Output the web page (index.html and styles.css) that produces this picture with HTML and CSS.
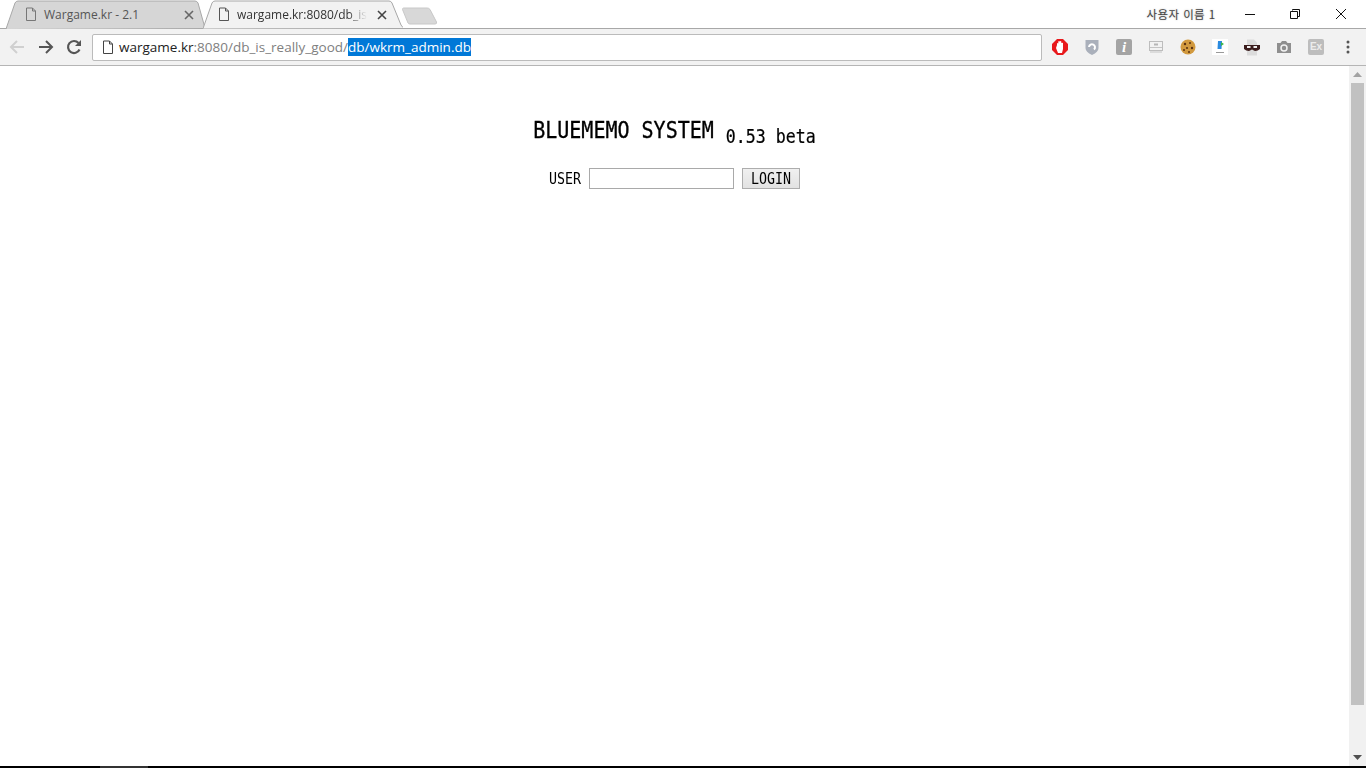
FILE: index.html
```html
<!DOCTYPE html>
<html lang="ko">
<head>
    <meta charset="UTF-8">
    <title>BLUEMEMO SYSTEM</title>
    <link rel="stylesheet" href="styles.css">
</head>
<body>
    <div class="tabstrip">
        <div class="tab tab_off">
            <svg class="tab_shape" width="199" height="29" viewBox="0 0 199 29"><path d="M0 29 L9 3 Q10 1 12 1 L189 1 Q191 1 192 3 L199 28" fill="#d6d6d6" stroke="#a8a8a8"/></svg>
            <svg class="page_icon" width="12" height="15" viewBox="0 0 12 15"><path d="M1.5 1 H7.5 L10.5 4 V13.5 H1.5 Z M7.5 1 V4 H10.5" fill="none" stroke="#777"/></svg>
            <span class="tab_title">Wargame.kr - 2.1</span>
            <svg class="tab_close" width="10" height="10" viewBox="0 0 10 10"><path d="M1 1 L9 9 M9 1 L1 9" stroke="#666" stroke-width="1.6"/></svg>
        </div>
        <div class="tab tab_on">
            <svg class="tab_shape" width="200" height="29" viewBox="0 0 200 29"><path d="M0 28.5 L9 3 Q10 1 12 1 L186 1 Q188 1 189 3 L198 25 Q199 28 203 28" fill="#f2f2f2" stroke="#a8a8a8"/></svg>
            <svg class="page_icon" width="12" height="15" viewBox="0 0 12 15"><path d="M1.5 1 H7.5 L10.5 4 V13.5 H1.5 Z M7.5 1 V4 H10.5" fill="none" stroke="#555"/></svg>
            <span class="tab_title tab_fade">wargame.kr:8080/db_is_</span>
            <svg class="tab_close" width="10" height="10" viewBox="0 0 10 10"><path d="M1 1 L9 9 M9 1 L1 9" stroke="#444" stroke-width="1.6"/></svg>
        </div>
        <svg class="new_tab" width="36" height="18" viewBox="0 0 36 18"><path d="M1.5 1 H25 Q27 1 28 2.5 L34.5 15 Q35 17 33 17 H8 Q6.500 17 6 16 L0.500 2.500 Q0.500 1 1.500 1 Z" fill="#d8d8d8" stroke="#c8c8c8"/></svg>
        <span class="user_name">사용자 이름 1</span>
        <div class="win_btns">
            <div class="win_btn"><svg width="12" height="12" viewBox="0 0 12 12"><path d="M1 6.500 H11" stroke="#111"/></svg></div>
            <div class="win_btn"><svg width="12" height="12" viewBox="1 0 12 12"><path d="M3.500 2.500 V1.500 H10.500 V8.500 H8.500 M1.500 3.500 H8.500 V10.500 H1.500 Z" fill="none" stroke="#111"/></svg></div>
            <div class="win_btn"><svg width="12" height="12" viewBox="0 0 12 12"><path d="M1 1 L11 11 M11 1 L1 11" stroke="#111"/></svg></div>
        </div>
    </div>

    <div class="toolbar">
        <div class="nav_btn"><svg width="16" height="16" viewBox="0 0 16 16"><path d="M15 8 H2 M8 2 L2 8 L8 14" fill="none" stroke="#d0d0d0" stroke-width="2"/></svg></div>
        <div class="nav_btn"><svg width="17" height="16" viewBox="-1 0 17 16"><path d="M1 8 H14 M8 2 L14 8 L8 14" fill="none" stroke="#555" stroke-width="2"/></svg></div>
        <div class="nav_btn"><svg width="17" height="16" viewBox="-1 0 17 16"><path d="M13.500 10.500 A6 6 0 1 1 12.500 4" fill="none" stroke="#555" stroke-width="2.200"/><path d="M15 1 V7 H9 Z" fill="#555"/></svg></div>
        <div class="omnibox">
            <svg class="page_icon" width="12" height="15" viewBox="0 0 12 15"><path d="M1.500 1 H7.500 L10.500 4 V13.500 H1.500 Z M7.500 1 V4 H10.500" fill="none" stroke="#444"/></svg>
            <span class="url"><b>wargame.kr</b>:8080/db_is_really_good/<span class="url_sel">db/wkrm_admin.db</span></span>
        </div>
        <div class="ext_list">
            <div class="ext"><svg width="18" height="18" viewBox="0 0 18 18"><path d="M6 1 H12 L17 6 V12 L12 17 H6 L1 12 V6 Z" fill="#e8191c"/><path d="M5 10 L6 7 V5.500 Q6.700 4.500 7.300 5.500 V3.500 Q8 2.700 8.700 3.500 V3.500 Q9.500 2.700 10.300 3.500 V5 Q11.200 4.300 12 5 V11 L11 15 H7 Z" fill="#fff"/></svg></div>
            <div class="ext"><svg width="14" height="17" viewBox="0 0 14 17"><path d="M0.500 1 H13.500 V9 Q13.500 13 7 16 Q0.500 13 0.500 9 Z" fill="#aab0bb"/><path d="M4 8 A3 3 0 1 1 9 10.500" fill="none" stroke="#fff" stroke-width="2"/></svg></div>
            <div class="ext"><div class="ext_info">i</div></div>
            <div class="ext"><svg width="14" height="12" viewBox="0 0 14 12"><rect x="0.500" y="0.500" width="13" height="9" fill="#f2f2f2" stroke="#bdbdbd"/><rect x="5" y="2.500" width="4" height="2" fill="#b5b5b5"/><path d="M1 6.500 H13 M1 11 H13" stroke="#c4c4c4"/></svg></div>
            <div class="ext"><svg width="16" height="16" viewBox="0 0 16 16"><circle cx="8" cy="8" r="7.500" fill="#d29a3f"/><circle cx="5" cy="5" r="1.200" fill="#5b3212"/><circle cx="10" cy="4" r="1" fill="#5b3212"/><circle cx="12" cy="9" r="1.200" fill="#5b3212"/><circle cx="7" cy="9" r="1.100" fill="#5b3212"/><circle cx="9" cy="13" r="1" fill="#5b3212"/><circle cx="4" cy="11" r="1" fill="#5b3212"/></svg></div>
            <div class="ext"><svg width="16" height="16" viewBox="0 0 16 16"><rect width="16" height="16" fill="#fff"/><path d="M6 2 H10 L9.500 10 H5.500 Z" fill="#2a8be0"/><path d="M9 3 L12 5 L9 7 Z" fill="#3cb54a"/><path d="M4 13.500 H12" stroke="#999"/></svg></div>
            <div class="ext"><svg width="16" height="17" viewBox="0 0 16 17"><path d="M3 0.500 H10 L13 3.500 V16.500 H3 Z" fill="#dcdcdc"/><path d="M0 6 H16 V10 Q14 12 11 12 L8 10.500 L5 12 Q2 12 0 10 Z" fill="#3a1c1c"/><rect x="3" y="7" width="3.500" height="2" fill="#eee"/><rect x="9.500" y="7" width="3.500" height="2" fill="#eee"/></svg></div>
            <div class="ext"><svg width="16" height="14" viewBox="0 0 16 14"><path d="M1 3 H4.500 L6 1 H10 L11.500 3 H15 V13 H1 Z" fill="#8f8f8f"/><circle cx="8" cy="8" r="3" fill="none" stroke="#f2f2f2" stroke-width="1.500"/></svg></div>
            <div class="ext"><div class="ext_ex">Ex</div></div>
            <div class="ext"><svg width="4" height="14" viewBox="0 0 4 14"><circle cx="2" cy="2" r="1.500" fill="#555"/><circle cx="2" cy="7" r="1.500" fill="#555"/><circle cx="2" cy="12" r="1.500" fill="#555"/></svg></div>
        </div>
    </div>

    <div class="viewport">
        <div class="content">
            <h2 class="title">BLUEMEMO SYSTEM <span class="version">0.53 beta</span></h2>
            <form class="login">
                <label class="login_label">USER</label>
                <input class="login_input" type="text">
                <button class="login_btn" type="button"><span class="tall_text">LOGIN</span></button>
            </form>
        </div>
        <div class="scrollbar">
            <svg class="scroll_arrow" width="9" height="5" viewBox="0 0 9 5"><path d="M4.500 0 L9 5 H0 Z" fill="#a3a3a3"/></svg>
            <div class="scroll_thumb"></div>
            <svg class="scroll_arrow" width="9" height="5" viewBox="0 0 9 5"><path d="M0 0 H9 L4.500 5 Z" fill="#505050"/></svg>
        </div>
    </div>

    <div class="taskbar"><div class="taskbar_item"></div></div>
</body>
</html>
```

FILE: styles.css
```css
*{
    margin: 0;
    padding: 0;
    box-sizing: border-box;
}
html,body{
    height: 100%;
    overflow: hidden;
}
body{
    display: flex;
    flex-direction: column;
    width: 1366px;
    height: 768px;
    background-color: #fff;
    font-family: "Open Sans", "Noto Sans", sans-serif;
}

/* tab strip */
.tabstrip{
    display: flex;
    align-items: flex-start;
    height: 29px;
    padding-left: 6px;
    position: relative;
    border-bottom: 1px solid #a8a8a8;
    flex-shrink: 0;
}
.tab{
    display: flex;
    align-items: center;
    height: 29px;
    position: relative;
}
.tab_off{
    width: 199px;
    padding-left: 19px;
}
.tab_on{
    width: 200px;
    margin-left: -2px;
    padding-left: 15px;
}
.tab_shape{
    position: absolute;
    left: 0;
    top: 0;
}
.page_icon{
    position: relative;
    flex-shrink: 0;
}
.tab_title{
    position: relative;
    margin-left: 7px;
    width: 130px;
    font-size: 12px;
    white-space: pre;
    color: #555;
}
.tab_on .tab_title{
    color: #333;
}
.tab_fade{
    -webkit-mask-image: linear-gradient(to right, #000 85%, transparent 100%);
    mask-image: linear-gradient(to right, #000 85%, transparent 100%);
}
.tab_close{
    position: relative;
    margin-left: 10px;
}
.new_tab{
    margin: 7px 0 0 -1px;
    flex-shrink: 0;
}
.user_name{
    margin: 6px 0 0 auto;
    font-family: "Noto Sans CJK KR", sans-serif;
    font-size: 11.5px;
    letter-spacing: 0.4px;
    line-height: 16px;
    color: #444;
    text-shadow: 0 0 2px #bbb;
}
.win_btns{
    display: flex;
    margin-left: 12px;
    padding-right: 2px;
}
.win_btn{
    display: flex;
    justify-content: center;
    align-items: center;
    width: 45.5px;
    height: 28px;
}

/* toolbar */
.toolbar{
    display: flex;
    align-items: center;
    height: 37px;
    padding: 0 2px 0 3px;
    background-color: #f2f2f2;
    border-bottom: 1px solid #b5b5b5;
    flex-shrink: 0;
}
.nav_btn{
    display: flex;
    justify-content: center;
    align-items: center;
    width: 28px;
    height: 28px;
}
.omnibox{
    display: flex;
    align-items: center;
    width: 950px;
    height: 27px;
    margin-left: 5px;
    padding-left: 9px;
    background-color: #fff;
    border: 1px solid #bbb;
    border-radius: 2px;
}
.url{
    margin-left: 5px;
    font-size: 13.5px;
    line-height: 18px;
    color: #808080;
    white-space: pre;
}
.url b{
    font-weight: normal;
    color: #222;
}
.url_sel{
    color: #fff;
    background-color: #0078d7;
}
.ext_list{
    display: flex;
    margin-left: 2px;
}
.ext{
    display: flex;
    justify-content: center;
    align-items: center;
    width: 32px;
    height: 28px;
}
.ext_info{
    width: 16px;
    height: 16px;
    background-color: #a4a4a4;
    border-radius: 2px;
    color: #fff;
    font: italic bold 15px/16px "Liberation Serif", serif;
    text-align: center;
}
.ext_ex{
    width: 16px;
    height: 16px;
    background-color: #bdbdbd;
    border-radius: 2px;
    color: #ececec;
    font: bold 10px/16px "Liberation Sans", sans-serif;
    text-align: center;
}

/* page */
.viewport{
    display: flex;
    flex: 1;
    min-height: 0;
}
.content{
    flex: 1;
    padding-top: 49px;
    text-align: center;
    font-family: "DejaVu Sans Mono", monospace;
    color: #000;
}
.title{
    font-size: 20px;
    font-weight: normal;
    line-height: 30px;
    transform: scaleY(1.13);
    -webkit-text-stroke: 0.3px #000;
}
.version{
    font-size: 16.6px;
    position: relative;
    top: 5px;
    -webkit-text-stroke: 0.2px #000;
}
.login{
    display: flex;
    justify-content: center;
    align-items: center;
    margin-top: 21px;
    font-size: 13.3px;
}
.login_label{
    margin-right: 8px;
    transform: scaleY(1.13);
}
.login_input{
    width: 145px;
    height: 21px;
    border: 1px solid #a9a9a9;
    background-color: #fff;
    margin-right: 8px;
}
.login_btn{
    width: 58px;
    height: 21px;
    border: 1px solid #adadad;
    background: linear-gradient(#f0f0f0, #e2e2e2);
    font-family: inherit;
    font-size: 13.3px;
    color: #000;
}
.tall_text{
    display: inline-block;
    transform: scaleY(1.13);
}
.scrollbar{
    display: flex;
    flex-direction: column;
    align-items: center;
    width: 17px;
    background-color: #f1f1f1;
}
.scroll_arrow{
    flex-shrink: 0;
    margin: 6px 0;
}
.scroll_thumb{
    width: 13px;
    flex: 1;
    margin-bottom: 44px;
    background-color: #c1c1c1;
}

.taskbar{
    height: 2px;
    padding-left: 100px;
    background-color: #000;
    flex-shrink: 0;
}
.taskbar_item{
    width: 48px;
    height: 2px;
    background-color: #333;
}
```
